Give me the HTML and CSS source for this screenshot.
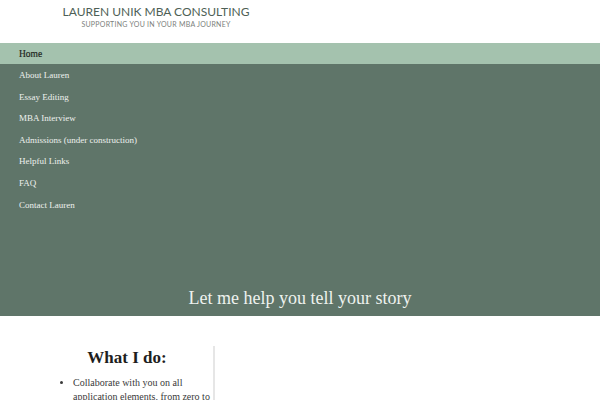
FILE: index.html
```html
<!DOCTYPE html>
<html>
<head>
<meta charset="utf-8">
<link rel="stylesheet" href="styles.css">
</head>
<body>
<header class="site-header">
  <div class="brand">
    <div class="title">LAUREN UNIK MBA CONSULTING</div>
    <div class="tagline">SUPPORTING YOU IN YOUR MBA JOURNEY</div>
  </div>
</header>
<nav class="menu">
  <a class="item active">Home</a>
  <div class="panel">
    <a class="item">About Lauren</a>
    <a class="item">Essay Editing</a>
    <a class="item">MBA Interview</a>
    <a class="item">Admissions (under construction)</a>
    <a class="item">Helpful Links</a>
    <a class="item">FAQ</a>
    <a class="item">Contact Lauren</a>
    <h1 class="hero">Let me help you tell your story</h1>
  </div>
</nav>
<main class="content">
  <section class="col">
    <h2>What I do:</h2>
    <ul>
      <li>Collaborate with you on all application elements, from zero to final</li>
    </ul>
  </section>
</main>
</body>
</html>
```
FILE: styles.css
```css
* { box-sizing: border-box; }
body {
  margin: 0;
  font-family: "Liberation Serif", serif;
  background: #fff;
  overflow: hidden;
  height: 400px;
}
.site-header {
  height: 43px;
  display: flex;
}
.brand {
  margin-left: 62px;
  padding-top: 4px;
  display: flex;
  flex-direction: column;
  align-items: center;
  width: 188px;
}
.title {
  font-family: Lato, sans-serif;
  font-size: 12px;
  color: #4e5f56;
  white-space: nowrap;
  line-height: 16px;
}
.tagline {
  font-family: Lato, sans-serif;
  font-size: 7px;
  color: #7c7f7d;
  letter-spacing: 0.25px;
  white-space: nowrap;
}
.menu { display: flex; flex-direction: column; }
.item {
  display: block;
  font-size: 9px;
  color: #eef1ee;
  padding: 0 19px;
  line-height: 21.6px;
}
.item.active {
  background: #a4c2ae;
  color: #1f2822;
  font-size: 9.5px;
  -webkit-text-stroke: 0.2px #1f2822;
  height: 21px;
  line-height: 22px;
}
.panel {
  background: #5f7569;
  height: 252px;
  padding-top: 1px;
  display: flex;
  flex-direction: column;
}
.hero {
  margin: auto 0 0;
  text-align: center;
  font-weight: normal;
  font-size: 18px;
  color: #eef2ee;
  line-height: 24px;
  padding-bottom: 6px;
}
.content {
  display: flex;
  padding-top: 30px;
}
.col {
  width: 215px;
  padding-left: 43px;
  padding-right: 2px;
  border-right: 2px solid #e6e6e6;
}
.col h2 {
  margin: 0;
  text-align: center;
  font-size: 17px;
  color: #1e1e1e;
  line-height: 24px;
}
.col ul {
  margin: 6px 0 0;
  padding-left: 30px;
  font-size: 10px;
  color: #3a3a3a;
  line-height: 13.5px;
}
```
